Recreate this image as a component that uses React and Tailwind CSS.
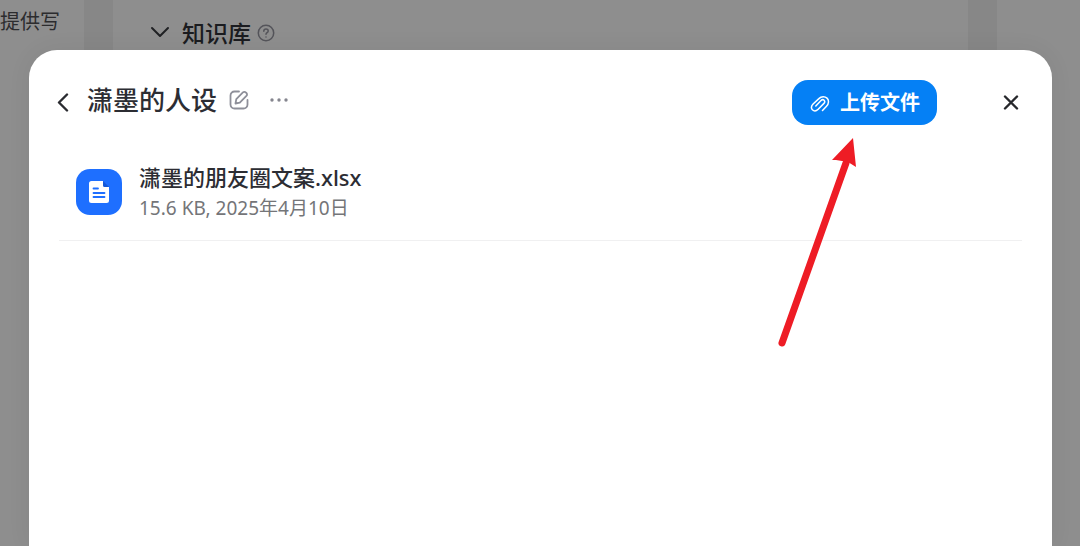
import React from "react";

const files = [
  { name: "潇墨的朋友圈文案.xlsx", size: "15.6 KB", date: "2025年4月10日" },
];

/* =========================
   ICONS
========================= */
const ChevronDown = () => (
  <svg width="20" height="20" viewBox="0 0 20 20" fill="none" stroke="#202124" strokeWidth="2" strokeLinecap="round" strokeLinejoin="round">
    <path d="M2 5l8 8 8-8" />
  </svg>
);

const HelpIcon = () => (
  <svg width="18" height="18" viewBox="0 0 18 18" fill="none" stroke="#54545a" strokeWidth="1.5" strokeLinecap="round" strokeLinejoin="round">
    <circle cx="9" cy="9" r="7.7" />
    <path d="M6.8 7.2c0-1.3 1-2.2 2.2-2.2s2.2.8 2.2 2c0 1.6-2.2 1.7-2.2 3.3M9 12.9v.1" />
  </svg>
);

const BackIcon = () => (
  <svg width="12" height="20" viewBox="0 0 12 20" fill="none" stroke="#2a2b30" strokeWidth="2.4" strokeLinecap="round" strokeLinejoin="round">
    <path d="M10 1.500L2 9.500l8 8" />
  </svg>
);

const EditIcon = () => (
  <svg width="20" height="20" viewBox="0 0 20 20" fill="none" stroke="#8e8f99" strokeWidth="1.8" strokeLinecap="round" strokeLinejoin="round">
    <path d="M10 1.500H5.500A4 4 0 0 0 1.500 5.500v9a4 4 0 0 0 4 4h9a4 4 0 0 0 4-4v-4.500" />
    <path d="M6.500 13.500l.8-4.400 6.600-6.700a2 2 0 0 1 2.900 0l.6.600a2 2 0 0 1 0 2.900l-6.600 6.700-4.300.9z" />
  </svg>
);

const MoreIcon = () => (
  <svg width="18" height="4" viewBox="0 0 18 4" fill="#85868f">
    <circle cx="2" cy="2" r="1.7" />
    <circle cx="9" cy="2" r="1.7" />
    <circle cx="16" cy="2" r="1.7" />
  </svg>
);

const ClipIcon = () => (
  <svg width="20" height="20" viewBox="0 0 20 20" fill="none" stroke="#fff" strokeWidth="1.5" strokeLinecap="round" strokeLinejoin="round">
    <path d="M12.500 17.500l4-4.200c2.500-2.600 2.600-6.200.5-8.200s-5.600-2-8.100.5L3.100 11c-2 2-2.200 4.400-.7 5.800s3.900 1.300 5.800-.6l5.500-5.600c1.200-1.200 1.200-2.500.4-3.300s-2.100-.8-3.300.4L5.800 13" />
  </svg>
);

const CloseIcon = () => (
  <svg width="16" height="16" viewBox="0 0 16 16" fill="none" stroke="#26272b" strokeWidth="2.4" strokeLinecap="round">
    <path d="M2 1.500l12 12M14 1.500L2 13.500" />
  </svg>
);

const DocIcon = () => (
  <svg width="20" height="22" viewBox="0 0 20 22">
    <path d="M14 0l6 6h-6z" fill="#1458d8" />
    <path d="M2.500 0H14v4.500A1.500 1.500 0 0 0 15.500 6H20v13.500a2.500 2.500 0 0 1-2.500 2.500h-15A2.500 2.500 0 0 1 0 19.500v-17A2.500 2.500 0 0 1 2.500 0z" fill="#fff" />
    <path d="M4.500 7.500H9M4.500 12h11M4.500 16h11" stroke="#1e6fff" strokeWidth="1.8" strokeLinecap="round" />
  </svg>
);

function FileRow({ file }) {
  return (
    <li className="flex items-center gap-[17px] border-b border-[#f0f0f1] px-[17px] pt-4 pb-[17px]">
      <div className="flex size-[46px] items-center justify-center rounded-[14px] bg-[#1e6fff]">
        <DocIcon />
      </div>
      <div>
        <div className="text-[22px] leading-8 font-medium text-[#2c2d33]">{file.name}</div>
        <div className="text-[19px] leading-[30px] text-[#747578]">
          {file.size}, {file.date}
        </div>
      </div>
    </li>
  );
}

function App() {
  return (
    <div className="relative h-screen overflow-hidden bg-[#8e8e8e] font-['Noto_Sans','Noto_Sans_CJK_SC',sans-serif]">
      {/* PAGE BEHIND THE DIALOG */}
      <div className="flex h-full">
        <aside className="w-[84px] pt-2 text-[20px] leading-7 whitespace-nowrap text-[#2c2c2e]">提供写</aside>
        <main className="flex-1 border-x-[29px] border-[#878787] px-[37px] pt-[17px]">
          <div className="flex items-center">
            <ChevronDown />
            <h2 className="ml-3 text-[23px] leading-8 font-medium text-[#1b1c20]">知识库</h2>
            <span className="ml-[6px]">
              <HelpIcon />
            </span>
          </div>
        </main>
        <aside className="w-[83px]" />
      </div>

      {/* DIALOG */}
      <div className="absolute inset-0 flex pt-[50px] pr-[28px] pl-[29px]">
        <section role="dialog" aria-labelledby="dialog-title" className="flex-1 rounded-t-[28px] bg-white px-[30px] shadow-[0_0_24px_rgba(0,0,0,0.06)]">
          <header className="flex h-[75px] items-center pt-[30px]">
            <button type="button" aria-label="返回" className="-ml-[2px]">
              <BackIcon />
            </button>
            <div className="ml-[18px] flex items-center self-start">
              <h1 id="dialog-title" className="text-[26px] leading-10 font-medium text-[#2c2d33]">潇墨的人设</h1>
              <button type="button" aria-label="编辑" className="ml-3">
                <EditIcon />
              </button>
              <button type="button" aria-label="更多" className="ml-[21px] py-2">
                <MoreIcon />
              </button>
            </div>

            <div className="relative mr-[66px] ml-auto">
              <button type="button" className="flex h-[45px] items-center gap-[10px] rounded-2xl bg-[#0580f5] pr-[17px] pl-[18px] text-[20px] font-bold text-white">
                <ClipIcon />
                上传文件
              </button>
              {/* pointer to the upload button */}
              <svg className="pointer-events-none absolute top-[58px] -left-4" width="84" height="212" viewBox="0 0 84 212">
                <path d="M6 205L70 25" stroke="#ee1c25" strokeWidth="7" strokeLinecap="round" />
                <path d="M77 0l3 29-8-5-12-2-4 0z" fill="#ee1c25" />
              </svg>
            </div>
            <button type="button" aria-label="关闭" className="mr-[3px]">
              <CloseIcon />
            </button>
          </header>

          <ul className="mt-5">
            {files.map((file) => (
              <FileRow key={file.name} file={file} />
            ))}
          </ul>
        </section>
      </div>
    </div>
  );
}

export default App;
